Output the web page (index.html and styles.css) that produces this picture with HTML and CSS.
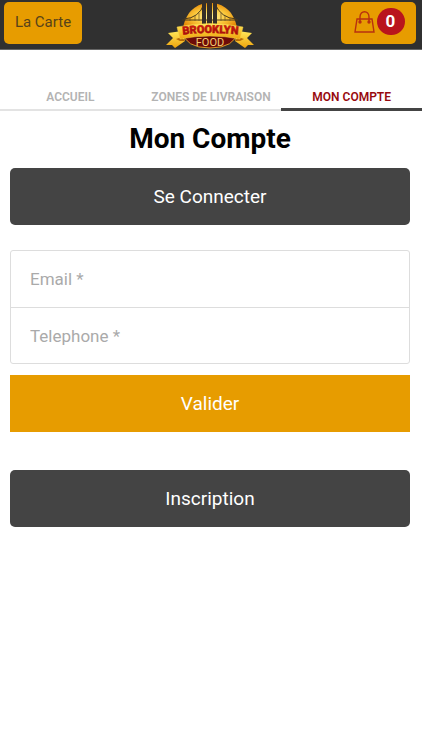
FILE: index.html
```html
<!DOCTYPE html>
<html lang="fr">
<head>
  <meta charset="UTF-8" />
  <meta name="viewport" content="width=device-width, initial-scale=1.0"/>
  <title>Brooklyn Food - Mon Compte</title>
  <link rel="stylesheet" href="styles.css">
</head>
<body>
  <header class="topbar">
    <a class="menu-link" href="#">La Carte</a>

    <a class="logo" href="#" aria-label="Brooklyn Food">
      <svg width="90" height="49" viewBox="0 0 90 49">
        <defs>
          <radialGradient id="sun" cx="50%" cy="55%" r="55%">
            <stop offset="0" stop-color="#fff6a0"/>
            <stop offset="0.55" stop-color="#fbc83c"/>
            <stop offset="1" stop-color="#e58a08"/>
          </radialGradient>
          <linearGradient id="gold" x1="0" y1="0" x2="0" y2="1">
            <stop offset="0" stop-color="#ffe75a"/>
            <stop offset="1" stop-color="#efa40c"/>
          </linearGradient>
          <linearGradient id="red" x1="0" y1="0" x2="0" y2="1">
            <stop offset="0" stop-color="#e3200f"/>
            <stop offset="1" stop-color="#8c0808"/>
          </linearGradient>
          <path id="arc" d="M13 35 Q45 31 78 35"/>
        </defs>

        <!-- sun and bridge -->
        <path d="M18 28 C21 11 32 3 45 3 S69 11 72 28 Z" fill="url(#sun)"/>
        <path d="M19 19 Q34 18 39 4 M50 4 Q56 18 71 19 M17 20 H73" fill="none" stroke="#4b3b1d" stroke-width="1"/>
        <path d="M25 18 V21 M30 16 V21 M34 13 V21 M56 13 V21 M60 16 V21 M65 18 V21" stroke="#6d5220" stroke-width="0.7"/>
        <path d="M37 26 V0 H41 V26 Z M42 26 V0 H47 V26 Z M48 26 V0 H52 V26 Z" fill="#352f28"/>

        <!-- red plate -->
        <path d="M17 31 Q45 25 73 31 Q70 48 45 48 Q20 48 17 31 Z" fill="#6c0b08" stroke="#d79a26" stroke-width="1"/>

        <!-- ribbon -->
        <path d="M17 31 L3 33 L8 38 L1 45 L7 45 L10 48 L20 41 Z" fill="url(#gold)"/>
        <path d="M73 31 L87 33 L82 38 L89 45 L83 45 L80 48 L70 41 Z" fill="url(#gold)"/>
        <path d="M11 39 L17 37 L20 41 L15 41 Z M79 39 L73 37 L70 41 L75 41 Z" fill="#b56a07"/>
        <path d="M12 27 Q45 20 78 27 L75 39 Q45 33 15 39 Z" fill="url(#gold)" stroke="#f6d34a" stroke-width="0.5"/>

        <text class="logo-name" text-anchor="middle"><textPath href="#arc" startOffset="50%">BROOKLYN</textPath></text>
        <text class="logo-food" x="45" y="46" text-anchor="middle">FOOD</text>
      </svg>
    </a>

    <a class="cart" href="#" aria-label="Panier">
      <svg width="22" height="24" viewBox="0 0 22 24" fill="none" stroke="#b8300f" stroke-width="1.4">
        <path d="M4 10 H19 L21 23 H2 Z"/>
        <path d="M7 12 V8 C7 1 16 1 16 8 V12"/>
        <circle cx="7" cy="13" r="1" fill="#b8300f"/>
        <circle cx="16" cy="13" r="1" fill="#b8300f"/>
      </svg>
      <span class="cart-count">0</span>
    </a>
  </header>

  <nav class="tabs">
    <a href="#">ACCUEIL</a>
    <a href="#">ZONES DE LIVRAISON</a>
    <a class="active" href="#">MON COMPTE</a>
  </nav>

  <main class="account">
    <h1>Mon Compte</h1>
    <button class="btn" type="button">Se Connecter</button>

    <form class="login">
      <div class="fields">
        <input type="email" placeholder="Email *" aria-label="Email">
        <input type="tel" placeholder="Telephone *" aria-label="Telephone">
      </div>
      <button class="btn btn-submit" type="submit">Valider</button>
    </form>

    <button class="btn" type="button">Inscription</button>
  </main>
</body>
</html>
```
FILE: styles.css
```css
* {
  box-sizing: border-box;
}

body {
  margin: 0;
  background: #fff;
  font-family: Roboto, sans-serif;
}

a {
  text-decoration: none;
}

/* Header */
.topbar {
  display: grid;
  grid-template-columns: 1fr auto 1fr;
  align-items: start;
  height: 50px;
  padding: 0 6px 0 4px;
  background: #303030;
  border-bottom: 1px solid #666;
}

.menu-link,
.cart {
  display: flex;
  align-items: center;
  justify-content: center;
  height: 42px;
  margin-top: 2px;
  background: #e79c00;
  border-radius: 5px;
}

.menu-link {
  justify-self: start;
  width: 78px;
  padding-bottom: 2px;
  color: #57431a;
  font-size: 15px;
}

.logo svg {
  display: block;
}

.logo-name {
  font-size: 11px;
  font-weight: 900;
  fill: url(#red);
  stroke: #b5120b;
  stroke-width: 0.5px;
}

.logo-food {
  font-size: 11px;
  fill: #f5cf72;
}

.cart {
  justify-self: end;
  gap: 2px;
  width: 75px;
  padding-bottom: 4px;
}

.cart-count {
  width: 28px;
  height: 27px;
  border-radius: 14px;
  background: #b9141c;
  color: #fff;
  font-size: 17px;
  font-weight: bold;
  line-height: 26px;
  text-align: center;
}

/* Tabs */
.tabs {
  display: grid;
  grid-template-columns: repeat(3, 1fr);
  margin-top: 36px;
}

.tabs a {
  height: 25px;
  border-bottom: 2px solid #e3e3e3;
  color: #b3b3b3;
  font-size: 12px;
  font-weight: 600;
  line-height: 22px;
  text-align: center;
  white-space: nowrap;
}

.tabs .active {
  border-bottom: 3px solid #444;
  color: #98090e;
}

/* Account */
.account {
  padding: 10px 12px 10px 10px;
}

h1 {
  margin: 0 0 12px;
  font-size: 28px;
  font-weight: bold;
  line-height: 35px;
  text-align: center;
}

.btn {
  display: block;
  width: 100%;
  height: 57px;
  border: 0;
  border-radius: 5px;
  background: #444;
  color: #fff;
  font-family: inherit;
  font-size: 19px;
}

.btn-submit {
  border-radius: 0;
  background: #e79c00;
}

.login {
  margin: 25px 0 38px;
}

.fields {
  margin-bottom: 11px;
  border: 1px solid #ddd;
  border-radius: 3px;
}

.fields input {
  display: block;
  width: 100%;
  height: 56px;
  padding: 0 19px;
  border: 0;
  background: transparent;
  font-family: inherit;
  font-size: 17px;
}

.fields input + input {
  border-top: 1px solid #ddd;
}

.fields input::placeholder {
  color: #aaa;
}
```
